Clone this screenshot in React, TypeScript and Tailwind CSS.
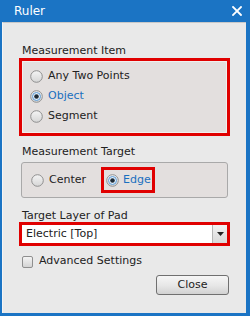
import React from "react";

function Radio({ checked }: { checked?: boolean }) {
  return (
    <svg width="13" height="13" viewBox="0 0 13 13" className="shrink-0">
      <defs>
        <linearGradient id={checked ? "rgc" : "rgu"} x1="0" y1="0" x2="0" y2="1">
          <stop offset="0" stopColor="#f4f4f4" />
          <stop offset="1" stopColor="#d6d6d6" />
        </linearGradient>
      </defs>
      <circle cx="6.5" cy="6.5" r="5.8" fill={`url(#${checked ? "rgc" : "rgu"})`} stroke="#8f8f8f" strokeWidth="1" />
      {checked && (
        <>
          <circle cx="6.5" cy="6.5" r="4" fill="#e3f0fb" stroke="#5d9cd6" strokeWidth="1" />
          <circle cx="6.5" cy="6.5" r="2.3" fill="#1f2b36" />
        </>
      )}
    </svg>
  );
}

export default function App() {
  return (
    <div className="w-[250px] h-[316px] bg-[#1b74c4] flex flex-col font-['DejaVu_Sans',Verdana,sans-serif] text-[11px] text-[#222]">
      <div className="h-[22px] flex items-center justify-between pl-[14px] pr-[7px] text-white text-[12px]">
        <span className="leading-none">Ruler</span>
        <svg width="10" height="10" viewBox="0 0 10 10" className="mr-[1px]">
          <path d="M1 1L9 9M9 1L1 9" stroke="#fff" strokeWidth="1.8" strokeLinecap="square" />
        </svg>
      </div>
      <div className="flex-1 ml-[2px] mr-[4px] mb-[3px] bg-[#e9e9e9] border-t border-t-[#c8c8c8] border-l border-l-[#f4f4f4] flex flex-col pl-[16px] pr-[16px] pt-[21px]">
        <div className="leading-[13px] ml-[3px]">Measurement Item</div>
        <div className="mt-[1px] border-[3px] border-[#e00000] h-[78px]">
          <div className="h-full border border-[#f1efee] bg-[#e3dfde] rounded-[2px] pl-[7px] pt-[4px] flex flex-col">
            <div className="h-[20px] flex items-center gap-[5px]">
              <Radio />
              <span>Any Two Points</span>
            </div>
            <div className="h-[20px] flex items-center gap-[5px]">
              <Radio checked />
              <span className="text-[#1a6fbf]">Object</span>
            </div>
            <div className="h-[20px] flex items-center gap-[5px]">
              <Radio />
              <span>Segment</span>
            </div>
          </div>
        </div>
        <div className="leading-[13px] ml-[3px] mt-[9px]">Measurement Target</div>
        <div className="mt-[4px] mx-[2px] h-[36px] border border-[#a9a9a9] rounded-[3px] bg-[#e3dfde] flex items-center pl-[9px]">
          <div className="flex items-center gap-[5px]">
            <Radio />
            <span>Center</span>
          </div>
          <div className="ml-[15px] h-[26px] w-[54px] border-[3px] border-[#e00000] flex items-center pl-[2px] gap-[4px]">
            <Radio checked />
            <span className="text-[#1a6fbf]">Edge</span>
          </div>
        </div>
        <div className="leading-[13px] ml-[3px] mt-[11px]">Target Layer of Pad</div>
        <div className="h-[24px] border-[3px] border-[#e00000] bg-white flex items-stretch">
          <div className="flex-1 flex items-center pl-[4px]">Electric [Top]</div>
          <div className="w-[15px] border-l border-[#b5b5b5] bg-gradient-to-b from-[#f2f2f2] to-[#d9d9d9] flex items-center justify-center">
            <svg width="7" height="4" viewBox="0 0 7 4">
              <path d="M0 0H7L3.5 4Z" fill="#222" />
            </svg>
          </div>
        </div>
        <div className="mt-[9px] h-[13px] flex items-center ml-[3px] gap-[6px]">
          <div className="w-[11px] h-[12px] rounded-[2px] border border-[#8f8f8f] bg-gradient-to-b from-[#f4f4f4] to-[#d4d4d4]" />
          <span>Advanced Settings</span>
        </div>
        <div className="mt-[7px] self-end mr-[1px] w-[73px] h-[20px] rounded-[3px] border border-[#707070] bg-gradient-to-b from-[#f6f6f6] via-[#e8e8e8] to-[#d2d2d2] flex items-center justify-center">
          Close
        </div>
      </div>
    </div>
  );
}
